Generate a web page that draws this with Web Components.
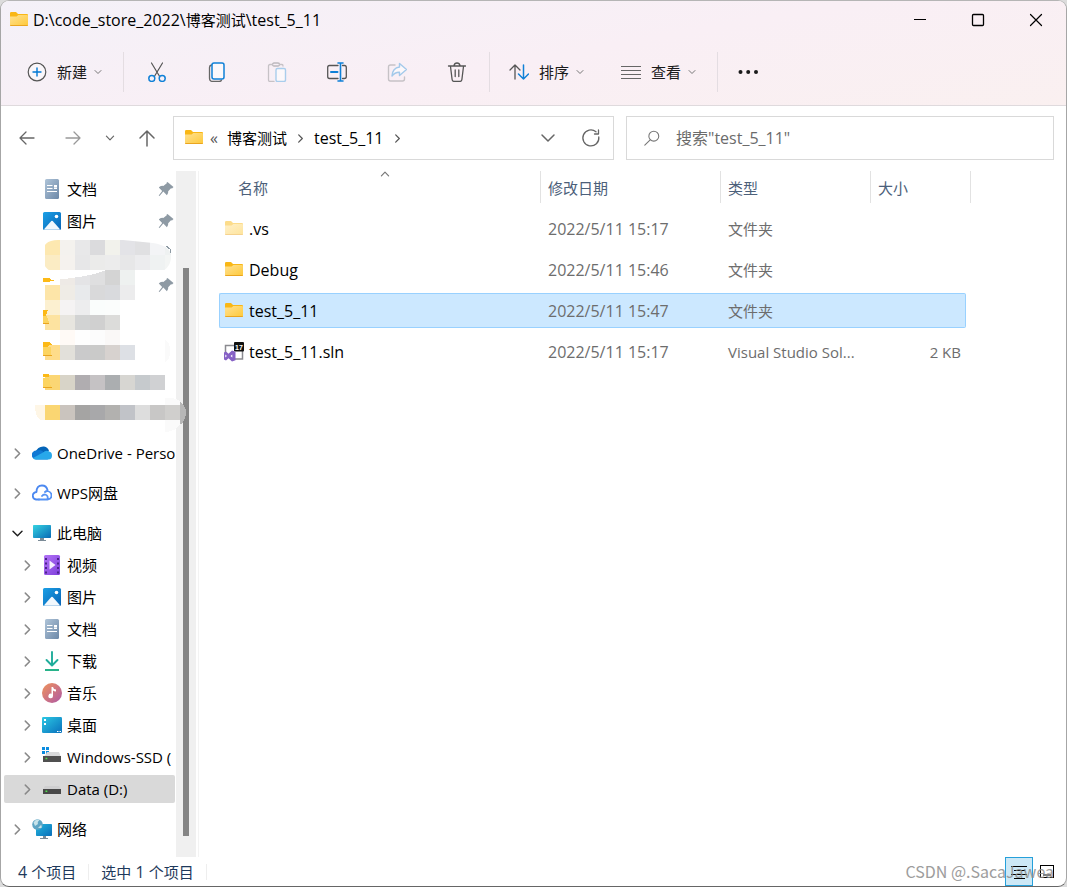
<!DOCTYPE html>
<html lang="zh-CN">
<head>
<meta charset="utf-8">
<title>test_5_11</title>
<style>
  html { background: #dcdcdc; }
  body { margin: 0; min-height: 100vh; display: flex; font-family: "Open Sans", "Noto Sans CJK SC", sans-serif; font-size: 16px; line-height: 20px; color: #000; --cjk: 15px; }
</style>
</head>
<body>
<ex-window></ex-window>
<script>
const folder = (a, b, c, d) => `<path d="M1 3.2Q1 2 2.2 2H7l2 2H18q1 0 1 1V8H1z" fill="${a}"/><path d="M1 6.4h6.6L9.4 5H18q1 0 1 1v9q0 1-1 1H2q-1 0-1-1z" fill="url(#${d})"/><path d="M1 15h18q0 1-1 1H2q-1 0-1-1z" fill="${c}"/><defs><linearGradient id="${d}" x1="0" y1="0" x2="1" y2="1"><stop stop-color="${b[0]}"/><stop offset="1" stop-color="${b[1]}"/></linearGradient></defs>`;
const grad = (id, a, b) => `<defs><linearGradient id="${id}" x1="0" y1="0" x2="1" y2="1"><stop stop-color="${a}"/><stop offset="1" stop-color="${b}"/></linearGradient></defs>`;
const line = (d, c = '#555', w = 1.3) => `<path d="${d}" fill="none" stroke="${c}" stroke-width="${w}" stroke-linecap="round" stroke-linejoin="round"/>`;
const ICONS = {
  folder: folder('#f9b716', ['#ffe192', '#fec939'], '#eaa51f', 'f'),
  folderFaded: folder('#fcdc8b', ['#fff0c9', '#fee49c'], '#f5d28f', 'g'),
  plus: `<circle cx="10" cy="10" r="8.8" fill="#fff6" stroke="#555" stroke-width="1.2"/>` + line('M6 10h8M10 6v8', '#0078d4', 1.4),
  cut: line('M4.5 1l8 13.2M15.5 1l-8 13.2', '#555', 1.2) + `<g fill="none" stroke="#0f80d7" stroke-width="1.5"><circle cx="4.8" cy="16.4" r="3"/><circle cx="15.2" cy="16.4" r="3"/></g>`,
  copy: line('M4.5 3Q2.5 3.5 2.5 5.5V16q0 3.5 3.5 3.5h6q2 0 2.500-1.500', '#666', 1.3) + `<rect x="5" y="1" width="12" height="16" rx="2" fill="#fff8" stroke="#0f80d7" stroke-width="1.5"/>`,
  paste: `<rect x="5.500" y="1" width="7" height="3" rx="1.500" fill="none" stroke="#bcb8bd" stroke-width="1.3"/>` + line('M5.500 2.500H3Q1.500 2.500 1.500 4v14q0 1.500 1.500 1.500h4M12.500 2.500H15q1 0 1 1.500', '#c6c2c6') + `<rect x="9" y="6.500" width="9.500" height="13" rx="1.500" fill="#fff8" stroke="#a9cdec" stroke-width="1.4"/>`,
  rename: line('M11 3.500H2.500Q.7 3.500.7 5.500v9q0 2 1.800 2H11M15.500 3.500h2q1.800 0 1.800 2v9q0 2-1.800 2h-2', '#555') + line('M11 1h5M13.500 1v18M11 19h5', '#0f80d7', 1.6) + line('M4 10h6.500', '#0f80d7', 2),
  share: line('M8 3H3.500Q1.500 3 1.500 5v12q0 2 2 2h12q2 0 2-2v-2', '#c6c2c6', 1.400) + `<path d="M12.500 1.500l7 6-7 6v-3.300Q8 10 5 14q.5-8 7.500-9z" fill="#fff8" stroke="#a3c9ea" stroke-width="1.400" stroke-linejoin="round"/>`,
  trash: line('M1.500 4h17M7 3.500Q7.500 1 10 1t3 2.500M3.500 4.500l1.600 13q.2 1.900 2 1.900h5.800q1.800 0 2-1.900l1.600-13M8.200 8v6.500M11.800 8v6.500', '#555', 1.3),
  sort: line('M6 17V3M1 8l5-5 5 5', '#555') + line('M14.500 3v14M9.500 12l5 5 5-5', '#0f80d7', 1.500),
  view: `<path d="M0 4.500h20M0 8.500h20M0 12.500h20M0 16.500h20" stroke="#666" stroke-width="1.200"/>`,
  more: `<g fill="#1b1b1b"><circle cx="2.500" cy="10" r="2"/><circle cx="10.200" cy="10" r="2"/><circle cx="18" cy="10" r="2"/></g>`,
  chev: line('M4 7l6 6 6-6', 'currentColor', 2),
  chevBig: line('M4 7l6 6 6-6', '#666', 1.5),
  right: line('M6 2l8 8-8 8', 'currentColor', 2.800),
  back: line('M17 10H3M9 4l-6 6 6 6', '#666'),
  fwd: line('M3 10h14M11 4l6 6-6 6', '#999'),
  up: line('M10 18V3M3 10l7-7 7 7', '#666', 1.500),
  refresh: line('M17.800 9A8 8 0 1 1 15 3.800M17.500 2v4h-4', '#666', 1.300),
  search: `<circle cx="12" cy="8" r="5.500" fill="none" stroke="#777" stroke-width="1.200"/>` + line('M8 12l-6 6', '#777', 1.200),
  min: `<path d="M4 9.500h12" stroke="#000"/>`,
  max: `<rect x="4.500" y="4.500" width="11" height="11" rx="1" fill="none" stroke="#000" stroke-width="1.300"/>`,
  close: line('M4.500 4.500l11 11M15.500 4.500l-11 11', '#000', 1.200),
  doc: `<rect x="3" width="14" height="20" rx="1.500" fill="url(#d)"/><path d="M5 6.500h5.500M5 9.500h5.500M5 12.500h10M12 9.500h3" stroke="#fff" stroke-width="1.200"/><rect x="12" y="6" width="3" height="2.600" fill="#fff"/>` + grad('d', '#afc4d8', '#6c88a8'),
  picture: `<rect x="1" y="1" width="18" height="18" rx="1.500" fill="url(#p)"/><path d="M2 18.300L9.300 10q.7-.7 1.400 0l7.300 8.300q-.5.5-1 .5H3q-.5 0-1-.5z" fill="#f2f8fd"/><circle cx="14.500" cy="5.500" r="1.800" fill="#fff"/>` + grad('p', '#1ba0e6', '#0863b5'),
  onedrive: `<path d="M3 9.500Q6 3 12 3.500q4 .5 5 4.500l-5 4z" fill="#0364b8"/><path d="M4 16.500A4.500 4.500 0 0 1 4.500 7.500q3.500-1.500 6.500 1l5 8z" fill="#0f78d4"/><path d="M4 16.500Q2 16.500 1 15l10-5.500Q14 6.500 17 8.500q3 .5 3 4.200t-3.500 3.800z" fill="#28a8ea"/>`,
  wps: line('M7 16.500H4Q.8 16 .8 12.800T4.500 9Q4.500 2.500 10 2.500q4.500 0 5.500 4.500', '#4b88f0', 1.800) + line('M7 16.500h8.500q4-.5 4-4t-4-4.500q-1.500 0-2.500 1M15.500 16q1-3.500-2.500-4.500-2 0-3 1.500', '#5793f4', 1.800),
  pc: `<rect x="1" y="2" width="18" height="13" rx=".8" fill="url(#c)"/><path d="M8 15h4v2h2v1H6v-1h2z" fill="#7b8b97"/>` + grad('c', '#35d3e1', '#0969b5'),
  video: `<rect x="2" width="16" height="20" rx="1.500" fill="url(#v)"/><g fill="#4b238b"><path d="M3 3h2v2H3zM3 7.500h2v2H3zM3 12h2v2H3zM3 16.500h2v2H3zM15 3h2v2h-2zM15 7.500h2v2h-2zM15 12h2v2h-2zM15 16.500h2v2h-2z"/></g><path d="M7.500 5.500l6 4.500-6 4.500z" fill="#f5edff"/>` + grad('v', '#b273f6', '#7e3edb'),
  download: line('M10 1v13M4.500 9l5.500 5.500L15.500 9', '#1fac9a', 1.900) + `<path d="M3 19h14" stroke="#28b38a" stroke-width="1.800"/>`,
  music: `<circle cx="10" cy="10" r="10" fill="url(#m)"/><path d="M9.500 4h1.500q.5 2.500 3 2.500v2Q12 8.500 11 7.500V13a2.300 2.300 0 1 1-1.500-2.200z" fill="#fff"/>` + grad('m', '#f0935a', '#ae58a6'),
  desktop: `<rect y="2" width="20" height="16" rx="1.200" fill="url(#k)"/><path d="M2 4h2v2H2zM2 8h2v2H2zM15 16h1.500v1H15zM17.500 16H19v1h-1.500z" fill="#fff"/>` + grad('k', '#2cc8e3', '#0a71bd'),
  ssd: `<path d="M0 0h3v3H0zM4 0h3v3H4zM0 4h3v3H0zM4 4h3v3H4z" fill="#0b8ce0"/><path d="M3.500 8L5 5h12l2 5H1z" fill="#d9dadb"/><rect x="1" y="9" width="18" height="6" fill="#505050"/><path d="M3.500 11.500h1.800" stroke="#4fe24b" stroke-width="1.500"/>`,
  drive: `<path d="M1 10l2-3h14l2 3z" fill="#cfcfd0"/><rect x="1" y="10" width="18" height="5" fill="#484848"/><path d="M3.500 12.300h1.800" stroke="#4fe24b" stroke-width="1.500"/>`,
  net: `<rect x="4" y="5" width="16" height="12" rx=".8" fill="url(#n)"/><path d="M11 17h3v2h2v1H8v-1h3z" fill="#7b8b97"/><circle cx="5.500" cy="5.500" r="5.300" fill="#5fa5c4"/><path d="M1.500 3.500Q4-.5 7.500 1 5 3 6 5L3 7zM6 9l3-3q1 1 .5 3z" fill="#c7e3ea"/>` + grad('n', '#24b7dd', '#0a6fba'),
  sln: `<path d="M1.500 11V3.500H10M18.500 8v9H11" fill="none" stroke="#8a8a90" stroke-width="1.500"/><rect x="10" width="10" height="9.500" rx="1" fill="#111"/><text x="15" y="7.500" text-anchor="middle" font-family="Liberation Sans" font-weight="bold" font-size="7" fill="#fff">17</text><path d="M0 10.500l2-1 2.500 2.300L8 8.500l3.500 1.300v8.400L8 19.500l-3.500-3.300L2 18.500l-2-1z" fill="#8661c5"/><path d="M1.300 12.500v3l1.600-1.500zM8.300 12.500L6.500 14l1.800 1.500z" fill="#fff"/>`,
  pin: `<path d="M12.500 3l6 5-1.500 1.500-1-.2-2.800 3q.4 2.200-1.300 3.900L8.300 12.500 4.500 17l-.8-.5 3.500-4.600L3.800 8.500Q5.500 6.400 8.300 7l3.500-2.700-.3-.6z" fill="#8e9aa4"/>`,
  list: `<path d="M2 4.500h16M5 8.500h11M2 12.500h16M5 16.500h11" stroke="#000" stroke-width="1.200"/>`,
  tiles: `<rect x="3.500" y="3.500" width="13" height="12" fill="none" stroke="#000"/><path d="M6 13h8" stroke="#000"/>`,
};

/* Chinese runs keep their own size beside Latin ones. */
const runs = s => s.replace(/[\u4e00-\u9fff]+/g, '<span class="zh">$&</span>');
const icon = (name, size = 20) => `<ex-icon name="${name}" style="--size:${size}px"></ex-icon>`;
const BASE = `*{box-sizing:border-box} .zh{font-size:var(--cjk)} button{font:inherit;color:inherit;background:none;border:0;padding:0;display:flex;align-items:center;justify-content:center}`;

function define(tag, css, markup) {
  customElements.define(tag, class extends HTMLElement {
    connectedCallback() {
      if (this.shadowRoot) return;
      this.attachShadow({ mode: 'open' }).innerHTML = `<style>${BASE}${css}</style>` + markup(this);
    }
  });
}

define('ex-icon', `:host{display:block;flex:none;width:var(--size);height:var(--size)} svg{display:block;width:100%;height:100%}`,
  el => `<svg viewBox="0 0 20 20" aria-hidden="true">${ICONS[el.getAttribute('name')]}</svg>`);

define('ex-titlebar', `:host{display:flex;align-items:center;height:37px;padding:0 1px 0 8px;gap:4px} h1{font-size:16px;font-weight:400;margin:0;flex:1;white-space:nowrap} .buttons{display:flex} button{width:58px;height:36px}`,
  () => `${icon('folder')}<h1>${runs('D:\\code_store_2022\\博客测试\\test_5_11')}</h1><div class="buttons"><button aria-label="最小化">${icon('min')}</button><button aria-label="最大化">${icon('max')}</button><button aria-label="关闭">${icon('close')}</button></div>`);

define('ex-command', `:host{display:block} button{height:40px;gap:10px;color:#1b1b1b} .chev{color:#777;margin-left:-4px} :host([compact]) button{width:60px}`,
  el => `<button aria-label="${el.getAttribute('label')}">${icon(el.getAttribute('icon'))}${el.hasAttribute('compact') ? '' : `<span class="zh">${el.getAttribute('label')}</span><span class="chev">${icon('chev', 10)}</span>`}</button>`);

define('ex-command-bar', `:host{display:flex;align-items:center;height:68px;padding-left:26px;border-bottom:1px solid #dfdadd} .sep{width:1px;height:40px;background:#e4dde2;margin:0 20px} .group{display:flex;margin:0 -18px 0 -17px} .menus{display:flex;gap:36px;margin-left:-1px}`,
  () => `<ex-command icon="plus" label="新建"></ex-command><i class="sep"></i><div class="group">${[['cut','剪切'],['copy','复制'],['paste','粘贴'],['rename','重命名'],['share','共享'],['trash','删除']].map(([i, l]) => `<ex-command compact icon="${i}" label="${l}"></ex-command>`).join('')}</div><i class="sep"></i><div class="menus"><ex-command icon="sort" label="排序"></ex-command><ex-command icon="view" label="查看"></ex-command></div><i class="sep"></i><button aria-label="更多">${icon('more')}</button>`);

define('ex-nav-bar', `:host{display:flex;padding:10px 12px 5px 8px} .moves{display:flex;gap:10px;margin-right:8px} .moves button{width:36px} .moves button.small{width:18px;color:#666}
  .box{height:44px;border:1px solid #d9d9d9;display:flex;align-items:center;background:#fff;min-width:0} .address{flex:1 1 441px;margin-right:12px;padding:0 12px 0 10px} .search{flex:1 1 428px;padding:0 16px}
  .crumbs{display:flex;align-items:center;flex:1;white-space:nowrap} .crumbs a{color:#000;text-decoration:none} .more{width:8px;margin:0 9px 0 6px;color:#555} .arrow{color:#555;margin:0 9px} .expand{margin-right:23px}
  input{font:inherit;flex:1;min-width:0;border:0;outline:0;background:none;padding:0;margin-left:15px} input::placeholder{color:#6b6b6b;opacity:1}`,
  () => `<div class="moves"><button aria-label="后退">${icon('back')}</button><button aria-label="前进">${icon('fwd')}</button><button class="small" aria-label="最近">${icon('chev', 12)}</button><button aria-label="上移">${icon('up')}</button></div>
  <div class="box address">${icon('folder')}<div class="crumbs"><span class="more">«</span><a href="#">${runs('博客测试')}</a><span class="arrow">${icon('right', 9)}</span><a href="#">test_5_11</a><span class="arrow">${icon('right', 9)}</span></div><button class="expand" aria-label="历史">${icon('chevBig')}</button><button aria-label="刷新">${icon('refresh')}</button></div>
  <label class="box search">${icon('search', 18)}<input type="text" aria-label="搜索" placeholder='搜索"test_5_11"'></label>`);

define('ex-tree-item', `:host{display:block;padding:2px 1px 2px 3px} :host([root]){margin-top:8px} a{display:flex;align-items:center;height:28px;padding-left:18px;color:#000;text-decoration:none;border-radius:2px;overflow:hidden} :host([root]) a{padding-left:8px} :host([selected]) a{background:#d9d9d9}
  .tw{width:10px;height:10px;margin-right:10px;color:#8a8a8a;display:flex;align-items:center;justify-content:center} .open{color:#222} .label{flex:1;margin-left:5px;white-space:nowrap;overflow:hidden}`,
  el => {
    const open = el.hasAttribute('open'), pinned = el.hasAttribute('pinned');
    return `<a href="#"><span class="tw ${open ? 'open' : ''}">${pinned ? '' : icon(open ? 'chev' : 'right', open ? 15 : 11)}</span>${icon(el.getAttribute('icon'))}<span class="label">${runs(el.getAttribute('label'))}</span>${pinned ? icon('pin') : ''}</a>`;
  });

/* Mosaic strips: [y, first x, colours of consecutive 15px cells]. */
const MOSAIC = [
  [270, 60, 'eeeae6 e4e4e6 dfdfe0 d4d4d4 eef1f0'],
  [285, 45, 'fde5a8 efece6 e8eaec d9d9da d9dadd ececed'],
  [300, 45, 'fcf0d0 f5f3f3 ededee fafdfc fbfdfc'],
  [315, 45, 'fde3a0 e7e5df d2d3d3 d0d0d0 dcdcda'],
  [330, 60, 'fffaf6 fefefe fcfcfc faf8f7'],
  [345, 45, 'fedc8a e2e0da cacacb cacac9 d7d2cf dde0e5'],
  [375, 45, 'fbd674 d8d4c8 b0adb0 c5c2c4 abaeb0 d7d6d2 c6cacd d0d1d3'],
  [405, 45, 'fad672 cac4be a5a4a3 a8a8aa b2b1af c1c3c8 dddddd c8c7c6 d0cfcd'],
];
const TOP = [
  [240, 45, 'fde8b0 f4f2ee e8e8e9 dbdbdd f2f2ec e3e3e7 e0e0e2 f3f4f6 eef1f1'],
  [255, 45, 'fbecc4 f5f2ee e7e7e8 ebebea ececec e7e7e8 ececee eff2f2 f3f5f4'],
];
const cells = ([y, x, c]) => c.split(' ').map((k, i) => `<path d="M${x + i * 15} ${y}h15v15h-15z" fill="#${k}"/>`).join('');
define('ex-masked-rows', `:host{display:block;height:192px;position:relative;z-index:1} svg{display:block;width:160px;height:192px;margin-left:31px;overflow:visible}`,
  () => `<svg viewBox="32 237 160 192" shape-rendering="crispEdges" aria-hidden="true">
    <path d="M35 405h10v15h-5q-5-4-5-15z" fill="#fef6e6"/><path d="M165 398q20-2 20 17-6 17-20 17z" fill="#fafafa"/><path d="M165 340q5 2 5 11t-5 11z" fill="#fafafa"/>
    ${MOSAIC.map(cells).join('')}
    <path d="M180 402q6 4 6 10t-4 12h-2z" fill="#b7b7b7"/><path d="M45 270h62q-25 9-62 10z" fill="#fff"/>
    <path d="M43 278h6l2 2h5l-8 2H43zM43 310h5l-2 6v8h-3zM43 342h7l2 3h-3l-2 3h-4zM43 374h6v3H43z" fill="#fcb916"/><path d="M43 316h4l2 7h-6zM43 347h8v8h-8zM43 378h6l2 9h-8z" fill="#fcd45f"/><path d="M43 323h6M43 355h9M43 387h9" stroke="#eaa51f"/>
    <clipPath id="top"><path d="M42 255q0-15 16-15h65l30 3q18 3 18 13 0 15-16 17H55q-13-4-13-18z"/></clipPath>
    <g clip-path="url(#top)">${TOP.map(cells).join('')}</g>
    <path d="M166 246l4 3v4" stroke="#8e9aa4" fill="none"/><g transform="translate(155 275)" shape-rendering="auto">${ICONS.pin}</g>
  </svg>`);

define('ex-scrollbar', `:host{display:flex;flex:none;width:20px;padding:97px 7px 21px;background:#f0f0f0} i{flex:1;background:#858585}`, () => `<i></i>`);

define('ex-sidebar', `:host{display:flex;width:198px;flex:none;margin-top:6px;border-right:1px solid #f3f3f3;font-size:15px} nav{width:175px;padding:2px 0 12px}`,
  () => `<nav><ex-tree-item pinned icon="doc" label="文档"></ex-tree-item><ex-tree-item pinned icon="picture" label="图片"></ex-tree-item><ex-masked-rows></ex-masked-rows>
  <ex-tree-item root icon="onedrive" label="OneDrive - Perso"></ex-tree-item><ex-tree-item root icon="wps" label="WPS网盘"></ex-tree-item><ex-tree-item root open icon="pc" label="此电脑"></ex-tree-item>
  ${[['video','视频'],['picture','图片'],['doc','文档'],['download','下载'],['music','音乐'],['desktop','桌面'],['ssd','Windows-SSD (']].map(([i, l]) => `<ex-tree-item icon="${i}" label="${l}"></ex-tree-item>`).join('')}
  <ex-tree-item selected icon="drive" label="Data (D:)"></ex-tree-item><ex-tree-item root icon="net" label="网络"></ex-tree-item></nav><ex-scrollbar></ex-scrollbar>`);

const FILES = [['folderFaded', '.vs', '2022/5/11 15:17', '文件夹', ''], ['folder', 'Debug', '2022/5/11 15:46', '文件夹', ''], ['folder', 'test_5_11', '2022/5/11 15:47', '文件夹', ''], ['sln', 'test_5_11.sln', '2022/5/11 15:17', 'Visual Studio Sol...', '2 KB']];
define('ex-file-table', `:host{display:block;flex:1;min-width:0;padding-left:20px} table{width:747px;table-layout:fixed;border-spacing:0 6px;border-collapse:separate}
  th{height:34px;padding:0 0 1px 7px;text-align:left;font-weight:400;color:#4c607a;position:relative} th:first-child{padding-left:19px} th::after{content:"";position:absolute;right:0;top:0;height:32px;width:1px;background:#e2e2e2} th:last-child::after{right:-5px}
  .asc{position:absolute;left:160px;top:-3px;color:#777;transform:rotate(180deg)}
  td{height:35px;padding:0 7px;color:#6d6d6d;white-space:nowrap;border:0 solid #99d1ff} td:first-child{padding-left:5px} td:nth-child(n+3){font-size:15px} td:last-child{text-align:right;padding-right:5px}
  .name{display:flex;align-items:center;gap:5px;color:#000}
  .sel td{background:#cce8ff;border-width:1px 0} .sel td:first-child{border-left-width:1px;border-radius:2px 0 0 2px;padding-left:4px} .sel td:last-child{border-right-width:1px;border-radius:0 2px 2px 0}`,
  () => `<table><colgroup><col style="width:322px"><col style="width:180px"><col style="width:150px"><col></colgroup><thead><tr><th>${runs('名称')}<span class="asc">${icon('chev', 12)}</span></th>${['修改日期', '类型', '大小'].map(h => `<th>${runs(h)}</th>`).join('')}</tr></thead>
  <tbody>${FILES.map(([i, n, d, t, s], k) => `<tr class="${k === 2 ? 'sel' : ''}"><td><span class="name">${icon(i)}${n}</span></td><td>${d}</td><td>${runs(t)}</td><td>${s}</td></tr>`).join('')}</tbody></table>`);

define('ex-status-bar', `:host{display:flex;align-items:center;height:29px;padding:0 5px 0 17px;color:#1e395b;position:relative} .sep{width:1px;height:16px;background:#eee;margin:0 12px} .views{margin-left:auto;display:flex;height:100%} .views button{width:28px} .views .on{background:#cce8f6;border:1px solid #26a0da}
  .mark{position:absolute;right:12px;top:4px;color:#8c8c8c;opacity:.85;font-family:"Noto Sans CJK SC",sans-serif;font-size:16px}`,
  () => `<span>${runs('4 个项目')}</span><i class="sep"></i><span>${runs('选中 1 个项目')}</span><i class="sep"></i><div class="views"><button class="on" aria-label="详细信息">${icon('list')}</button><button aria-label="大图标">${icon('tiles')}</button></div><span class="mark">CSDN @.SacaJawea</span>`);

define('ex-window', `:host{display:flex;flex-direction:column;flex:1;min-width:0;box-sizing:border-box;border:1px solid #a6a6a6;border-top-color:#b5b5b5;border-bottom-color:#666;border-radius:9px;background:#fff;overflow:hidden} header{background:linear-gradient(170deg,#f4f1f8 0%,#f9eff5 52%,#faf0f0 100%)} main{display:flex;flex:1}`,
  () => `<header><ex-titlebar></ex-titlebar><ex-command-bar></ex-command-bar></header><ex-nav-bar></ex-nav-bar><main><ex-sidebar></ex-sidebar><ex-file-table></ex-file-table></main><ex-status-bar></ex-status-bar>`);
</script>
</body>
</html>
